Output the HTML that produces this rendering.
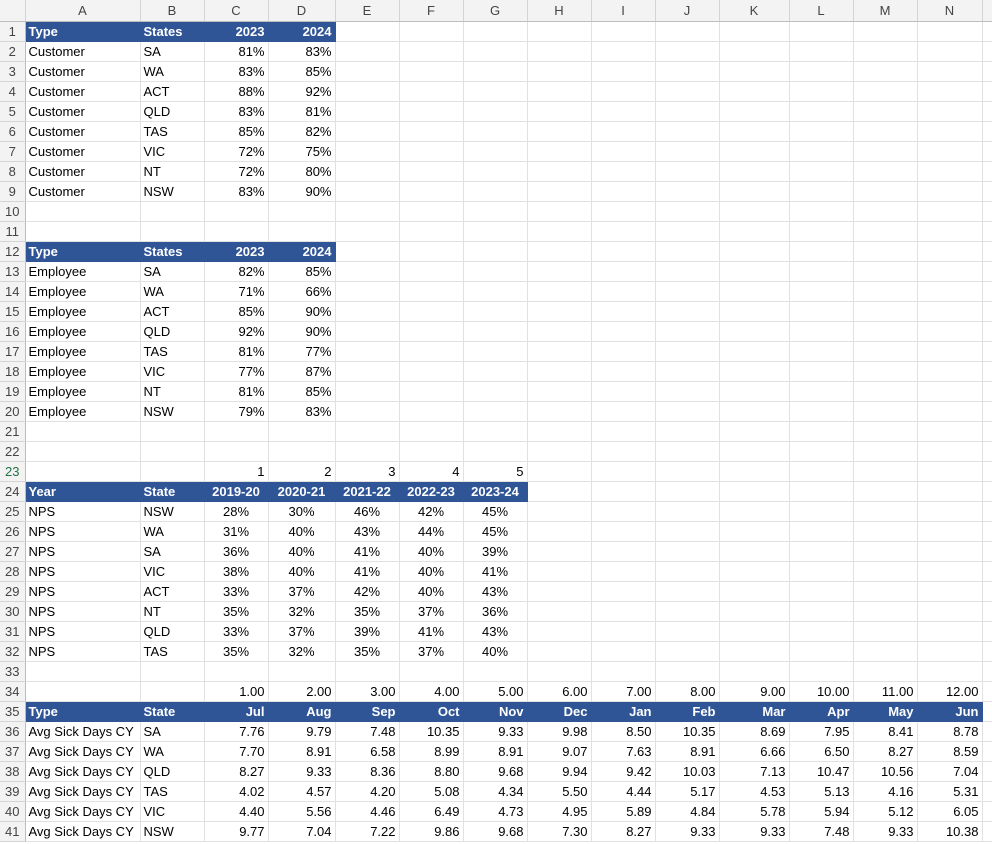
<!DOCTYPE html>
<html><head><meta charset="utf-8"><style>
body{margin:0;background:#fff;font-family:"Liberation Sans",Arial,sans-serif;font-size:13px;color:#000;overflow:hidden}
table{border-collapse:collapse;table-layout:fixed;width:992px}
td{height:19px;border-right:1px solid #e1e1e1;border-bottom:1px solid #e1e1e1;padding:0 3px;white-space:nowrap;overflow:hidden;line-height:19px}
tr.h td{height:21px;background:#f3f3f3;color:#444;text-align:center;font-size:13px;border-right:1px solid #d4d4d4;border-bottom:1px solid #bdbdbd}
td.r0{background:#f3f3f3;color:#444;text-align:center;font-size:13px;border-right:1px solid #bdbdbd;border-bottom:1px solid #d4d4d4;padding:0}
.b{background:#2f5597;color:#fff;font-weight:bold;border-color:#2f5597}
.R{text-align:right}.C{text-align:center}
</style></head><body>
<table>
<colgroup><col style="width:25px"><col style="width:115px"><col style="width:64px"><col style="width:64px"><col style="width:67px"><col style="width:64px"><col style="width:64px"><col style="width:64px"><col style="width:64px"><col style="width:64px"><col style="width:64px"><col style="width:70px"><col style="width:64px"><col style="width:64px"><col style="width:65px"><col style="width:10px"></colgroup>
<tr class="h"><td></td><td>A</td><td>B</td><td>C</td><td>D</td><td>E</td><td>F</td><td>G</td><td>H</td><td>I</td><td>J</td><td>K</td><td>L</td><td>M</td><td>N</td><td></td></tr>
<tr><td class="r0">1</td><td class="b">Type</td><td class="b">States</td><td class="b R">2023</td><td class="b R">2024</td><td></td><td></td><td></td><td></td><td></td><td></td><td></td><td></td><td></td><td></td><td></td></tr>
<tr><td class="r0">2</td><td>Customer</td><td>SA</td><td class="R">81%</td><td class="R">83%</td><td></td><td></td><td></td><td></td><td></td><td></td><td></td><td></td><td></td><td></td><td></td></tr>
<tr><td class="r0">3</td><td>Customer</td><td>WA</td><td class="R">83%</td><td class="R">85%</td><td></td><td></td><td></td><td></td><td></td><td></td><td></td><td></td><td></td><td></td><td></td></tr>
<tr><td class="r0">4</td><td>Customer</td><td>ACT</td><td class="R">88%</td><td class="R">92%</td><td></td><td></td><td></td><td></td><td></td><td></td><td></td><td></td><td></td><td></td><td></td></tr>
<tr><td class="r0">5</td><td>Customer</td><td>QLD</td><td class="R">83%</td><td class="R">81%</td><td></td><td></td><td></td><td></td><td></td><td></td><td></td><td></td><td></td><td></td><td></td></tr>
<tr><td class="r0">6</td><td>Customer</td><td>TAS</td><td class="R">85%</td><td class="R">82%</td><td></td><td></td><td></td><td></td><td></td><td></td><td></td><td></td><td></td><td></td><td></td></tr>
<tr><td class="r0">7</td><td>Customer</td><td>VIC</td><td class="R">72%</td><td class="R">75%</td><td></td><td></td><td></td><td></td><td></td><td></td><td></td><td></td><td></td><td></td><td></td></tr>
<tr><td class="r0">8</td><td>Customer</td><td>NT</td><td class="R">72%</td><td class="R">80%</td><td></td><td></td><td></td><td></td><td></td><td></td><td></td><td></td><td></td><td></td><td></td></tr>
<tr><td class="r0">9</td><td>Customer</td><td>NSW</td><td class="R">83%</td><td class="R">90%</td><td></td><td></td><td></td><td></td><td></td><td></td><td></td><td></td><td></td><td></td><td></td></tr>
<tr><td class="r0">10</td><td></td><td></td><td></td><td></td><td></td><td></td><td></td><td></td><td></td><td></td><td></td><td></td><td></td><td></td><td></td></tr>
<tr><td class="r0">11</td><td></td><td></td><td></td><td></td><td></td><td></td><td></td><td></td><td></td><td></td><td></td><td></td><td></td><td></td><td></td></tr>
<tr><td class="r0">12</td><td class="b">Type</td><td class="b">States</td><td class="b R">2023</td><td class="b R">2024</td><td></td><td></td><td></td><td></td><td></td><td></td><td></td><td></td><td></td><td></td><td></td></tr>
<tr><td class="r0">13</td><td>Employee</td><td>SA</td><td class="R">82%</td><td class="R">85%</td><td></td><td></td><td></td><td></td><td></td><td></td><td></td><td></td><td></td><td></td><td></td></tr>
<tr><td class="r0">14</td><td>Employee</td><td>WA</td><td class="R">71%</td><td class="R">66%</td><td></td><td></td><td></td><td></td><td></td><td></td><td></td><td></td><td></td><td></td><td></td></tr>
<tr><td class="r0">15</td><td>Employee</td><td>ACT</td><td class="R">85%</td><td class="R">90%</td><td></td><td></td><td></td><td></td><td></td><td></td><td></td><td></td><td></td><td></td><td></td></tr>
<tr><td class="r0">16</td><td>Employee</td><td>QLD</td><td class="R">92%</td><td class="R">90%</td><td></td><td></td><td></td><td></td><td></td><td></td><td></td><td></td><td></td><td></td><td></td></tr>
<tr><td class="r0">17</td><td>Employee</td><td>TAS</td><td class="R">81%</td><td class="R">77%</td><td></td><td></td><td></td><td></td><td></td><td></td><td></td><td></td><td></td><td></td><td></td></tr>
<tr><td class="r0">18</td><td>Employee</td><td>VIC</td><td class="R">77%</td><td class="R">87%</td><td></td><td></td><td></td><td></td><td></td><td></td><td></td><td></td><td></td><td></td><td></td></tr>
<tr><td class="r0">19</td><td>Employee</td><td>NT</td><td class="R">81%</td><td class="R">85%</td><td></td><td></td><td></td><td></td><td></td><td></td><td></td><td></td><td></td><td></td><td></td></tr>
<tr><td class="r0">20</td><td>Employee</td><td>NSW</td><td class="R">79%</td><td class="R">83%</td><td></td><td></td><td></td><td></td><td></td><td></td><td></td><td></td><td></td><td></td><td></td></tr>
<tr><td class="r0">21</td><td></td><td></td><td></td><td></td><td></td><td></td><td></td><td></td><td></td><td></td><td></td><td></td><td></td><td></td><td></td></tr>
<tr><td class="r0">22</td><td></td><td></td><td></td><td></td><td></td><td></td><td></td><td></td><td></td><td></td><td></td><td></td><td></td><td></td><td></td></tr>
<tr><td class="r0" style="color:#217346">23</td><td></td><td></td><td class="R">1</td><td class="R">2</td><td class="R">3</td><td class="R">4</td><td class="R">5</td><td></td><td></td><td></td><td></td><td></td><td></td><td></td><td></td></tr>
<tr><td class="r0">24</td><td class="b">Year</td><td class="b">State</td><td class="b C">2019-20</td><td class="b C">2020-21</td><td class="b C">2021-22</td><td class="b C">2022-23</td><td class="b C">2023-24</td><td></td><td></td><td></td><td></td><td></td><td></td><td></td><td></td></tr>
<tr><td class="r0">25</td><td>NPS</td><td>NSW</td><td class="C">28%</td><td class="C">30%</td><td class="C">46%</td><td class="C">42%</td><td class="C">45%</td><td></td><td></td><td></td><td></td><td></td><td></td><td></td><td></td></tr>
<tr><td class="r0">26</td><td>NPS</td><td>WA</td><td class="C">31%</td><td class="C">40%</td><td class="C">43%</td><td class="C">44%</td><td class="C">45%</td><td></td><td></td><td></td><td></td><td></td><td></td><td></td><td></td></tr>
<tr><td class="r0">27</td><td>NPS</td><td>SA</td><td class="C">36%</td><td class="C">40%</td><td class="C">41%</td><td class="C">40%</td><td class="C">39%</td><td></td><td></td><td></td><td></td><td></td><td></td><td></td><td></td></tr>
<tr><td class="r0">28</td><td>NPS</td><td>VIC</td><td class="C">38%</td><td class="C">40%</td><td class="C">41%</td><td class="C">40%</td><td class="C">41%</td><td></td><td></td><td></td><td></td><td></td><td></td><td></td><td></td></tr>
<tr><td class="r0">29</td><td>NPS</td><td>ACT</td><td class="C">33%</td><td class="C">37%</td><td class="C">42%</td><td class="C">40%</td><td class="C">43%</td><td></td><td></td><td></td><td></td><td></td><td></td><td></td><td></td></tr>
<tr><td class="r0">30</td><td>NPS</td><td>NT</td><td class="C">35%</td><td class="C">32%</td><td class="C">35%</td><td class="C">37%</td><td class="C">36%</td><td></td><td></td><td></td><td></td><td></td><td></td><td></td><td></td></tr>
<tr><td class="r0">31</td><td>NPS</td><td>QLD</td><td class="C">33%</td><td class="C">37%</td><td class="C">39%</td><td class="C">41%</td><td class="C">43%</td><td></td><td></td><td></td><td></td><td></td><td></td><td></td><td></td></tr>
<tr><td class="r0">32</td><td>NPS</td><td>TAS</td><td class="C">35%</td><td class="C">32%</td><td class="C">35%</td><td class="C">37%</td><td class="C">40%</td><td></td><td></td><td></td><td></td><td></td><td></td><td></td><td></td></tr>
<tr><td class="r0">33</td><td></td><td></td><td></td><td></td><td></td><td></td><td></td><td></td><td></td><td></td><td></td><td></td><td></td><td></td><td></td></tr>
<tr><td class="r0">34</td><td></td><td></td><td class="R">1.00</td><td class="R">2.00</td><td class="R">3.00</td><td class="R">4.00</td><td class="R">5.00</td><td class="R">6.00</td><td class="R">7.00</td><td class="R">8.00</td><td class="R">9.00</td><td class="R">10.00</td><td class="R">11.00</td><td class="R">12.00</td><td></td></tr>
<tr><td class="r0">35</td><td class="b">Type</td><td class="b">State</td><td class="b R">Jul</td><td class="b R">Aug</td><td class="b R">Sep</td><td class="b R">Oct</td><td class="b R">Nov</td><td class="b R">Dec</td><td class="b R">Jan</td><td class="b R">Feb</td><td class="b R">Mar</td><td class="b R">Apr</td><td class="b R">May</td><td class="b R">Jun</td><td></td></tr>
<tr><td class="r0">36</td><td>Avg Sick Days CY</td><td>SA</td><td class="R">7.76</td><td class="R">9.79</td><td class="R">7.48</td><td class="R">10.35</td><td class="R">9.33</td><td class="R">9.98</td><td class="R">8.50</td><td class="R">10.35</td><td class="R">8.69</td><td class="R">7.95</td><td class="R">8.41</td><td class="R">8.78</td><td></td></tr>
<tr><td class="r0">37</td><td>Avg Sick Days CY</td><td>WA</td><td class="R">7.70</td><td class="R">8.91</td><td class="R">6.58</td><td class="R">8.99</td><td class="R">8.91</td><td class="R">9.07</td><td class="R">7.63</td><td class="R">8.91</td><td class="R">6.66</td><td class="R">6.50</td><td class="R">8.27</td><td class="R">8.59</td><td></td></tr>
<tr><td class="r0">38</td><td>Avg Sick Days CY</td><td>QLD</td><td class="R">8.27</td><td class="R">9.33</td><td class="R">8.36</td><td class="R">8.80</td><td class="R">9.68</td><td class="R">9.94</td><td class="R">9.42</td><td class="R">10.03</td><td class="R">7.13</td><td class="R">10.47</td><td class="R">10.56</td><td class="R">7.04</td><td></td></tr>
<tr><td class="r0">39</td><td>Avg Sick Days CY</td><td>TAS</td><td class="R">4.02</td><td class="R">4.57</td><td class="R">4.20</td><td class="R">5.08</td><td class="R">4.34</td><td class="R">5.50</td><td class="R">4.44</td><td class="R">5.17</td><td class="R">4.53</td><td class="R">5.13</td><td class="R">4.16</td><td class="R">5.31</td><td></td></tr>
<tr><td class="r0">40</td><td>Avg Sick Days CY</td><td>VIC</td><td class="R">4.40</td><td class="R">5.56</td><td class="R">4.46</td><td class="R">6.49</td><td class="R">4.73</td><td class="R">4.95</td><td class="R">5.89</td><td class="R">4.84</td><td class="R">5.78</td><td class="R">5.94</td><td class="R">5.12</td><td class="R">6.05</td><td></td></tr>
<tr><td class="r0">41</td><td>Avg Sick Days CY</td><td>NSW</td><td class="R">9.77</td><td class="R">7.04</td><td class="R">7.22</td><td class="R">9.86</td><td class="R">9.68</td><td class="R">7.30</td><td class="R">8.27</td><td class="R">9.33</td><td class="R">9.33</td><td class="R">7.48</td><td class="R">9.33</td><td class="R">10.38</td><td></td></tr>
</table>
</body></html>
